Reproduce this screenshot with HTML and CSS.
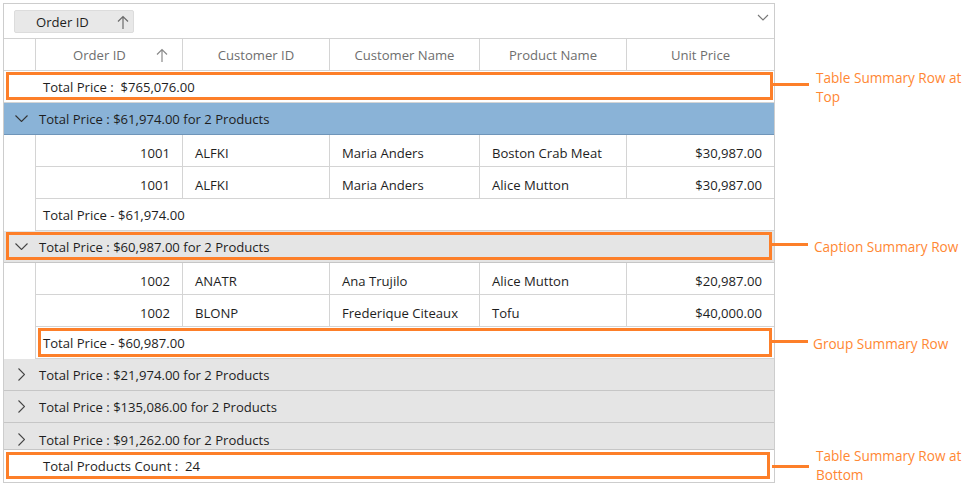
FILE: index.html
```html
<!DOCTYPE html>
<html>
<head>
<meta charset="utf-8">
<link rel="stylesheet" href="styles.css">
</head>
<body>
<div class="page">
  <div class="grid">
    <div class="groupbar">
      <div class="chip">
        <span>Order ID</span>
        <svg class="up" width="12" height="14" viewBox="0 0 12 14"><path d="M6 1.5V14M1 6.5l5-5 5 5" fill="none" stroke="#6b6b6b" stroke-width="1.2"/></svg>
      </div>
      <svg class="dropdown" width="12" height="7" viewBox="0 0 12 7"><path d="M1 1l5 5 5-5" fill="none" stroke="#777" stroke-width="1.1"/></svg>
    </div>

    <div class="row header">
      <div class="cell indent"></div>
      <div class="cell hcell sorted"><span>Order ID</span><svg class="up" width="12" height="14" viewBox="0 0 12 14"><path d="M6 1.5V14M1 6.5l5-5 5 5" fill="none" stroke="#8a8a8a" stroke-width="1.2"/></svg></div>
      <div class="cell hcell">Customer ID</div>
      <div class="cell hcell">Customer Name</div>
      <div class="cell hcell">Product Name</div>
      <div class="cell hcell last">Unit Price</div>
    </div>

    <div class="row tsum hl">
      <div class="sumtext">Total Price :&nbsp; $765,076.00</div>
      <div class="box"></div>
      <div class="callout top"><i class="line"></i><span>Table Summary Row at<br>Top</span></div>
    </div>

    <div class="row caption selected">
      <div class="chev"><svg width="13" height="7" viewBox="0 0 13 7"><path d="M0.5 0.5l6 6 6-6" fill="none" stroke="#333" stroke-width="1.1"/></svg></div>
      <div class="captext">Total Price : $61,974.00 for 2 Products</div>
    </div>
    <div class="row data">
      <div class="cell indent"></div>
      <div class="cell num">1001</div>
      <div class="cell">ALFKI</div>
      <div class="cell">Maria Anders</div>
      <div class="cell">Boston Crab Meat</div>
      <div class="cell num last">$30,987.00</div>
    </div>
    <div class="row data">
      <div class="cell indent"></div>
      <div class="cell num">1001</div>
      <div class="cell">ALFKI</div>
      <div class="cell">Maria Anders</div>
      <div class="cell">Alice Mutton</div>
      <div class="cell num last">$30,987.00</div>
    </div>
    <div class="row gsum">
      <div class="cell indent"></div>
      <div class="cell span">Total Price - $61,974.00</div>
    </div>

    <div class="row caption hl">
      <div class="chev"><svg width="13" height="7" viewBox="0 0 13 7"><path d="M0.5 0.5l6 6 6-6" fill="none" stroke="#444" stroke-width="1.1"/></svg></div>
      <div class="captext">Total Price : $60,987.00 for 2 Products</div>
      <div class="box"></div>
      <div class="callout"><i class="line"></i><span>Caption Summary Row</span></div>
    </div>
    <div class="row data">
      <div class="cell indent"></div>
      <div class="cell num">1002</div>
      <div class="cell">ANATR</div>
      <div class="cell">Ana Trujilo</div>
      <div class="cell">Alice Mutton</div>
      <div class="cell num last">$20,987.00</div>
    </div>
    <div class="row data">
      <div class="cell indent"></div>
      <div class="cell num">1002</div>
      <div class="cell">BLONP</div>
      <div class="cell">Frederique Citeaux</div>
      <div class="cell">Tofu</div>
      <div class="cell num last">$40,000.00</div>
    </div>
    <div class="row gsum hl">
      <div class="cell indent"></div>
      <div class="cell span">Total Price - $60,987.00</div>
      <div class="box inner"></div>
      <div class="callout"><i class="line"></i><span>Group Summary Row</span></div>
    </div>

    <div class="row caption">
      <div class="chev"><svg width="7" height="13" viewBox="0 0 7 13"><path d="M0.5 0.5l6 6-6 6" fill="none" stroke="#444" stroke-width="1.1"/></svg></div>
      <div class="captext">Total Price : $21,974.00 for 2 Products</div>
    </div>
    <div class="row caption">
      <div class="chev"><svg width="7" height="13" viewBox="0 0 7 13"><path d="M0.5 0.5l6 6-6 6" fill="none" stroke="#444" stroke-width="1.1"/></svg></div>
      <div class="captext">Total Price : $135,086.00 for 2 Products</div>
    </div>
    <div class="row caption short">
      <div class="chev"><svg width="7" height="13" viewBox="0 0 7 13"><path d="M0.5 0.5l6 6-6 6" fill="none" stroke="#444" stroke-width="1.1"/></svg></div>
      <div class="captext">Total Price : $91,262.00 for 2 Products</div>
    </div>

    <div class="row tsum bottom hl">
      <div class="sumtext">Total Products Count :&nbsp; 24</div>
      <div class="box"></div>
      <div class="callout top"><i class="line"></i><span>Table Summary Row at<br>Bottom</span></div>
    </div>
  </div>
</div>
</body>
</html>
```

FILE: styles.css
```css
* { box-sizing: border-box; }
html, body { margin: 0; padding: 0; background: #fff; }
body {
  font-family: "Open Sans", "Noto Sans", sans-serif;
  font-size: 13.1px;
  color: #1e1e1e;
}
.page { padding: 3px 0 0 3px; }
.grid {
  width: 772px;
  border: 1px solid #cdcdcd;
  display: flex;
  flex-direction: column;
}
.groupbar {
  height: 35px;
  border-bottom: 1px solid #d2d2d2;
  display: flex;
  align-items: flex-start;
  justify-content: space-between;
  padding: 6px 0 0 10px;
}
.chip {
  width: 120px;
  height: 23px;
  background: #e8e8e8;
  border: 1px solid #dcdcdc;
  border-radius: 2px;
  display: flex;
  align-items: center;
  padding-left: 21px;
  color: #1e1e1e;
}
.chip .up { margin-left: 28px; }
.dropdown { margin: 4px 5px 0 0; }

.row {
  display: grid;
  grid-template-columns: 32px 147px 147px 150px 147px 147px;
  height: 32px;
  position: relative;
}
.cell {
  display: flex;
  align-items: center;
  padding: 0 12px;
  border-right: 1px solid #d4d4d4;
  border-bottom: 1px solid #d4d4d4;
  white-space: nowrap;
}
.data .cell { padding-top: 5px; }
.cell.last { border-right: none; }
.cell.indent { border-bottom: none; padding: 0; }
.cell.num { justify-content: flex-end; }

.header .cell { border-bottom: 1px solid #d4d4d4; color: #6e6e6e; justify-content: center; }
.header .cell.indent { border-bottom: 1px solid #d4d4d4; }
.header .sorted { justify-content: flex-start; padding-left: 37px; }
.header .sorted .up { margin-left: 30px; }

.tsum {
  display: flex;
  align-items: center;
  border-bottom: 1px solid #d4d4d4;
}
.tsum.bottom { border-bottom: none; }
.sumtext { padding-left: 39px; }

.gsum .span { grid-column: 2 / 7; border-right: none; padding-left: 7px; }

.caption {
  display: flex;
  align-items: center;
  background: #e5e5e5;
  border-bottom: 1px solid #c6c6c6;
}
.caption.selected { background: #8ab3d7; border-bottom-color: #6f95b9; }
.caption.short { height: 27px; align-items: flex-start; overflow: hidden; }
.caption.short > .chev,
.caption.short > .captext { height: 31px; display: flex; align-items: center; padding-top: 2px; }
.chev { width: 32px; display: flex; justify-content: center; align-items: center; padding-left: 2px; }
.captext { padding-left: 3px; }

.box {
  position: absolute;
  left: 2px;
  right: 1px;
  top: 1px;
  bottom: 2px;
  border: 3px solid #fd7f29;
  pointer-events: none;
}
.caption .box { right: 2px; }
.box.inner { left: 34px; right: 2px; }
.tsum.bottom .box { right: 4px; top: 2px; bottom: 3px; }

.callout {
  position: absolute;
  left: calc(100% - 2px);
  top: 0;
  bottom: 0;
  display: flex;
  align-items: center;
  color: #ff8733;
  white-space: nowrap;
  line-height: 19px;
  font-size: 13.6px;
}
.callout .line {
  display: block;
  width: 37px;
  height: 3px;
  background: #fd7f29;
  margin: -4px 5px 0 0;
}
.callout.top .line { margin-right: 7px; }
.tsum.bottom .callout { bottom: 2px; }
.tsum.bottom .callout .line { margin-top: 2px; margin-right: 7px; }
.caption .callout .line { width: 36px; margin-right: 6px; }
.gsum .callout .line { width: 36px; margin-right: 5px; }
```
